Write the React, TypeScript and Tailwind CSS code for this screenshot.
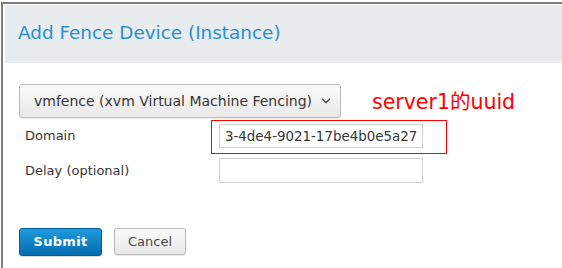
import { ChevronDown } from 'lucide-react'

export default function App() {
  return (
    <div
      className="relative w-[562px] h-[268px] overflow-hidden bg-white pt-[2px] pl-[1px]"
      style={{ fontFamily: '"DejaVu Sans", "Noto Sans CJK SC", sans-serif' }}
    >
      <div className="h-full border-t-2 border-l-2 border-[#7d7d7d] pt-[1px] pl-[2px]">
        {/* header */}
        <div className="h-[58px] bg-[#e8ecef] flex items-center pl-[13px]">
          <h1 className="text-[18.4px] text-[#2b8fcd] leading-none pb-[2px]">Add Fence Device (Instance)</h1>
        </div>

        {/* body */}
        <div className="pl-[14px] pt-[21px]">
          <button className="flex items-center whitespace-nowrap w-[322px] h-[34px] pl-[14px] pr-[12px] rounded-[3px] border border-[#bcbcbc] bg-gradient-to-b from-[#fafafa] to-[#e9e9e9] shadow-[0_1px_1px_rgba(0,0,0,0.08)] text-[14px] text-[#363636]">
            <span>vmfence (xvm Virtual Machine Fencing)</span>
            <ChevronDown size={14} strokeWidth={2.5} className="shrink-0 ml-[7px] text-[#4a4a4a]" />
          </button>

          <div className="flex flex-col gap-[10px] mt-[6px] pl-[6px]">
            <div className="flex items-center">
              <label className="w-[194px] text-[13px] text-[#363636]">Domain</label>
              <input
                readOnly
                value="3-4de4-9021-17be4b0e5a27"
                className="w-[204px] h-[24px] border border-[#d1d1d1] px-[5px] text-[13.4px] text-[#363636] outline-none"
                style={{ fontFamily: '"DejaVu Sans", sans-serif' }}
              />
            </div>
            <div className="flex items-center">
              <label className="w-[194px] text-[13px] text-[#363636]">Delay (optional)</label>
              <input
                readOnly
                className="w-[204px] h-[25px] border border-[#d1d1d1] px-[5px] text-[13px] outline-none"
              />
            </div>
          </div>

          <div className="flex items-start gap-[12px] mt-[45px]">
            <button className="w-[83px] h-[28px] rounded-[3px] border border-[#005f98] bg-gradient-to-b from-[#1d9ade] to-[#046cad] text-white text-[13px] font-bold tracking-[0.3px] shadow-[0_1px_1px_rgba(0,0,0,0.15)]">
              Submit
            </button>
            <button className="w-[72px] h-[27px] rounded-[3px] border border-[#b9b9b9] bg-gradient-to-b from-[#fbfbfb] to-[#e8e8e8] text-[#4a4a4a] text-[13px] shadow-[0_1px_1px_rgba(0,0,0,0.1)]">
              Cancel
            </button>
          </div>
        </div>
      </div>

      {/* annotation overlay */}
      <div className="absolute left-[372px] top-[92px] text-[20.5px] leading-none text-[#ff0000]">server1的uuid</div>
      <div className="absolute left-[211px] top-[120px] w-[236px] h-[34px] border border-[#ff0000]" />
    </div>
  )
}
